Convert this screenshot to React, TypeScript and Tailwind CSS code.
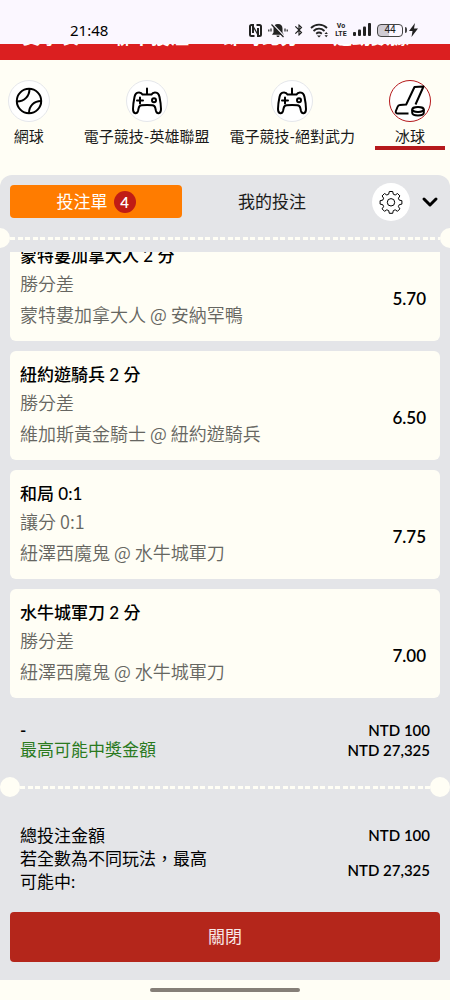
import type { ReactNode } from 'react';
import { useState } from 'react';
import clsx from 'clsx';
import { ChevronDown } from 'lucide-react';
import { MdBluetooth } from 'react-icons/md';

interface Bet {
  title: string;
  market: string;
  match: string;
  odds: string;
}

const navLinks = ['賽事表', '聯串投注', '即時比分', '運動數據'];

const bets: Bet[] = [
  { title: '蒙特婁加拿大人 2 分', market: '勝分差', match: '蒙特婁加拿大人 @ 安納罕鴨', odds: '5.70' },
  { title: '紐約遊騎兵 2 分', market: '勝分差', match: '維加斯黃金騎士 @ 紐約遊騎兵', odds: '6.50' },
  { title: '和局 0:1', market: '讓分 0:1', match: '紐澤西魔鬼 @ 水牛城軍刀', odds: '7.75' },
  { title: '水牛城軍刀 2 分', market: '勝分差', match: '紐澤西魔鬼 @ 水牛城軍刀', odds: '7.00' },
];

function TennisIcon() {
  return (
    <svg viewBox="0 0 28 28" className="w-7 h-7" fill="none" stroke="currentColor" strokeWidth="2">
      <circle cx="14" cy="14" r="12.2" />
      <path d="M14.500 2c0 7-5 12.500-12.500 12.500M14 26c0-7 5-12 12-12" />
    </svg>
  );
}

function GamepadIcon() {
  return (
    <svg viewBox="0 0 32 28" className="w-8 h-7" fill="none" stroke="currentColor" strokeWidth="2" strokeLinecap="round" strokeLinejoin="round">
      <path d="M16 1.500v6M11.500 7.500h9c.8-1.500 2.200-2.200 4-2 2.300.2 3.400 1.500 4 4.500.8 3.800 1.500 8 1.500 12 0 2.500-.6 4-2.300 4.200-1.500.2-2.300-.7-2.700-2.200l-.7-3c-.4-1.700-1.300-2.500-3-2.700-3.500-.4-7-.4-10.600 0-1.700.2-2.600 1-3 2.700l-.7 3C6.600 25.500 5.800 26.400 4.300 26.200 2.600 26 2 24.500 2 22c0-4 .7-8.200 1.500-12 .6-3 1.700-4.300 4-4.500 1.800-.2 3.200.5 4 2Z" />
      <path d="M9 10.500v6M6 13.500h6" />
      <circle cx="23" cy="13.200" r="2" />
    </svg>
  );
}

function HockeyIcon() {
  return (
    <svg viewBox="0 0 32 32" className="w-8 h-8 overflow-visible" fill="none" stroke="currentColor" strokeWidth="2" strokeLinejoin="round">
      <path d="M14.500 28.500H4C2 28.500 1.400 27.300 1.900 26l1.600-4c.5-1.300 1.200-1.800 2.500-1.900l6.200-.6L20.500 2l9-.5L21.500 19.500" />
      <ellipse cx="24" cy="24.500" rx="5.800" ry="2.400" />
      <path d="M18.200 24.500v3.300c0 1.500 2.600 2.600 5.800 2.600s5.800-1.100 5.800-2.600v-3.300" />
    </svg>
  );
}

function GearIcon() {
  return (
    <svg viewBox="0 0 24 24" className="w-6 h-6" fill="none" stroke="currentColor" strokeWidth="1" strokeLinejoin="round">
      <path d="M10.300 1.500h3.400l.6 2.700 1.900.8 2.300-1.500L20.900 5.900l-1.500 2.300.8 1.900 2.700.6v3.400l-2.700.6-.8 1.900 1.500 2.300-2.400 2.400-2.300-1.500-1.900.8-.6 2.700h-3.400l-.6-2.700-1.900-.8-2.300 1.500-2.400-2.400 1.500-2.300-.8-1.900-2.700-.6v-3.400l2.700-.6.8-1.900-1.500-2.300 2.400-2.400 2.300 1.500 1.900-.8Z" />
      <circle cx="12" cy="12.300" r="3.700" />
    </svg>
  );
}

const sports: { name: string; icon: ReactNode; active?: boolean }[] = [
  { name: '網球', icon: <TennisIcon /> },
  { name: '電子競技-英雄聯盟', icon: <GamepadIcon /> },
  { name: '電子競技-絕對武力', icon: <GamepadIcon /> },
  { name: '冰球', icon: <HockeyIcon />, active: true },
];

function StatusBar() {
  return (
    <div className="h-11 bg-[#fbf7ff] flex items-end justify-between pl-[70px] pr-8 pb-1 text-[#222]">
      <span className="font-['Noto_Sans'] text-[15px] leading-5 text-black">21:48</span>
      <div className="flex items-center gap-1.5 h-5">
        {/* NFC */}
        <svg viewBox="0 0 13 13" className="w-[13px] h-[13px]" fill="none" stroke="currentColor" strokeWidth="2">
          <path d="M5.500 12H2.500C1.500 12 1 11.500 1 10.500v-8C1 1.500 1.500 1 2.500 1H4v8M7.500 1h3C11.500 1 12 1.500 12 2.500v8c0 1-.5 1.500-1.500 1.500H9V4" />
          <path d="m4 2 5 9" strokeWidth="1.200" />
        </svg>
        {/* Muted bell */}
        <svg viewBox="0 0 20 15" className="w-5 h-[15px]">
          <path d="M10 1c-3 0-4.500 2-4.500 4.500v4L4 11.800h12L14.500 9.500v-4C14.500 3 13 1 10 1ZM8.500 12.600h3c0 2-3 2-3 0Z" fill="currentColor" />
          <path d="M5 1.500 16.500 13.500" stroke="#fbf7ff" strokeWidth="1.500" />
          <path d="M3.500 1.500 15.500 14M.8 6.500v2M3 5.500v3M19.200 6.500v2M17 5.500v3" stroke="currentColor" strokeWidth="1.200" />
        </svg>
        <MdBluetooth className="w-[14px] h-4 -mx-0.5" />
        {/* Wi-Fi */}
        <svg viewBox="0 0 19 15" className="w-[19px] h-[15px]" fill="none" stroke="currentColor" strokeWidth="1.800">
          <path d="M1 5c4.500-4.500 11.500-4.500 16 0M3.500 8c3.300-3 7.700-3 11 0M6.200 10.700c1.800-1.500 3.800-1.500 5.600 0" />
          <path d="m9 14.500-2-2h4Z" fill="currentColor" stroke="none" />
          <path d="m14.500 11 1.700-2 1.700 2ZM14.500 12.200l1.700 2 1.700-2Z" fill="currentColor" stroke="none" />
        </svg>
        <span className="w-3 flex flex-col items-center font-['Roboto'] text-[7px] leading-[8px] font-bold">
          <span>Vo</span>
          <span>LTE</span>
        </span>
        {/* Signal */}
        <svg viewBox="0 0 18 14" className="w-[18px] h-[14px]" fill="currentColor">
          <rect y="9" width="3" height="4" rx="1" />
          <rect x="5" y="6.500" width="3" height="6.500" rx="1" />
          <rect x="10" y="3.500" width="3" height="9.500" rx="1" />
          <rect x="15" y="0" width="3" height="13" rx="1" />
        </svg>
        <div className="flex items-center gap-0.5">
          <span className="w-[26px] h-[13px] rounded border border-[#444] bg-linear-to-r from-[#cfcbd3] from-45% to-transparent to-45% flex items-center justify-center font-['Roboto'] text-[10px] leading-3">
            44
          </span>
          <span className="w-0.5 h-1.5 rounded-r bg-[#444]" />
          <svg viewBox="0 0 9 14" className="w-[9px] h-[14px]" fill="currentColor">
            <path d="M6 0 0 8h3.500L2.500 14 9 5.500H5Z" />
          </svg>
        </div>
      </div>
    </div>
  );
}

// Perforated ticket edge: two punched holes joined by a dashed line
function Perforation({ edge }: { edge?: boolean }) {
  return (
    <div className={clsx('flex items-center', edge ? '-mx-5' : '-mx-2.5')}>
      <span className="w-5 h-5 shrink-0 rounded-full bg-[#fffef5]" />
      <span className="flex-1 h-[3px] bg-[repeating-linear-gradient(90deg,#fffef5_0_5px,transparent_5px_8px,#fffef5_8px_13px,transparent_13px_15px)]" />
      <span className="w-5 h-5 shrink-0 rounded-full bg-[#fffef5]" />
    </div>
  );
}

function BetCard({ bet }: { bet: Bet }) {
  return (
    <li className="flex items-center justify-between rounded-md bg-[#fffef5] pl-2.5 pr-3.5 pt-3 pb-[15px]">
      <div>
        <p className="text-[17px] leading-6 font-medium text-black">{bet.title}</p>
        <div className="font-['Noto_Sans_CJK_TC',sans-serif] text-[18px] leading-6 font-[350] text-[#666661]">
          <p className="mt-[3px]">{bet.market}</p>
          <p className="mt-[7px]">{bet.match}</p>
        </div>
      </div>
      <span className="mt-7 text-[17px] leading-6 font-semibold text-black">{bet.odds}</span>
    </li>
  );
}

export default function App() {
  const [tab, setTab] = useState<'slip' | 'mine'>('slip');

  return (
    <div lang="zh-Hant" className="min-h-screen flex flex-col bg-[#fffef5] text-black font-['Lato','Noto_Sans_CJK_TC',sans-serif]">
      <StatusBar />

      {/* Main nav, scrolled under the status bar */}
      <nav className="h-4 overflow-hidden bg-[#db1f20]">
        <div className="-mt-[17px] flex gap-[34px] pl-[22px] text-[19px] leading-5 font-bold text-white whitespace-nowrap">
          {navLinks.map((link) => (
            <a key={link} href="#">{link}</a>
          ))}
        </div>
      </nav>

      {/* Sports */}
      <div className="flex justify-end gap-5 overflow-hidden pt-5 pr-[5px] pb-[25px]">
        {sports.map((s) => (
          <a
            key={s.name}
            href="#"
            className={clsx(
              'min-w-[70px] shrink-0 flex flex-col items-center border-b-4',
              s.active ? 'border-[#b5191c]' : 'border-transparent'
            )}
          >
            <span
              className={clsx(
                'w-[42px] h-[42px] rounded-full border bg-white flex items-center justify-center',
                s.active ? 'border-[#b5191c]' : 'border-gray-200'
              )}
            >
              {s.icon}
            </span>
            <span className="mt-1 text-[15px] leading-5 text-[#1a1a1a] whitespace-nowrap">{s.name}</span>
          </a>
        ))}
      </div>

      {/* Bet slip */}
      <section className="flex-1 rounded-t-xl bg-[#e4e5e8] px-2.5 pt-2.5 overflow-hidden">
        <div className="flex items-center h-[33px]">
          <button
            type="button"
            onClick={() => setTab('slip')}
            aria-pressed={tab === 'slip'}
            className="flex-1 h-[33px] rounded bg-[#ff7c00] text-white text-[17px] flex items-center justify-center gap-1.5"
          >
            投注單
            <span className="w-[22px] h-[22px] rounded-full bg-[#c01c15] text-[15px] leading-[22px] font-semibold">4</span>
          </button>
          <button
            type="button"
            onClick={() => setTab('mine')}
            aria-pressed={tab === 'mine'}
            className="flex-1 h-[33px] ml-1 text-[17px] text-[#1a1a1a]"
          >
            我的投注
          </button>
          <button type="button" aria-label="設定" className="w-[38px] h-[38px] ml-3.5 rounded-full bg-white flex items-center justify-center">
            <GearIcon />
          </button>
          <button type="button" aria-label="收合" className="ml-2.5 w-5 h-5 flex items-center justify-center">
            <ChevronDown className="w-6 h-6 shrink-0" strokeWidth={3} />
          </button>
        </div>

        <div className="mt-2.5">
          <Perforation edge />
        </div>

        <div className="mt-1 overflow-hidden">
          <ul className="-mt-5 space-y-2.5">
            {bets.map((bet) => (
              <BetCard key={bet.title} bet={bet} />
            ))}
          </ul>
        </div>

        <dl className="grid grid-cols-[1fr_auto] px-2.5 pt-[22px] pb-[17px]">
          <dt className="text-[17px] leading-5 font-semibold">-</dt>
          <dd className="text-[15px] leading-5 text-right font-semibold">NTD 100</dd>
          <dt className="text-[17px] leading-5 text-[#2a7a1e]">最高可能中獎金額</dt>
          <dd className="text-[15px] leading-5 text-right font-semibold">NTD 27,325</dd>
        </dl>

        <Perforation />

        <dl className="grid grid-cols-[200px_1fr] items-center px-2.5 pt-[27px]">
          <dt className="text-[17px] leading-[23px]">總投注金額</dt>
          <dd className="text-[15px] leading-[23px] text-right font-semibold">NTD 100</dd>
          <dt className="text-[17px] leading-[23px]">若全數為不同玩法，最高可能中:</dt>
          <dd className="text-[15px] leading-[23px] text-right font-semibold">NTD 27,325</dd>
        </dl>

        <button type="button" className="mt-[19px] mb-[18px] w-full h-[50px] rounded bg-[#b4261b] text-[17px] text-white/90">
          關閉
        </button>
      </section>

      {/* Gesture bar */}
      <div className="h-5 flex items-center justify-center">
        <span className="w-1/3 h-1 rounded-full bg-[#857f78]" />
      </div>
    </div>
  );
}
